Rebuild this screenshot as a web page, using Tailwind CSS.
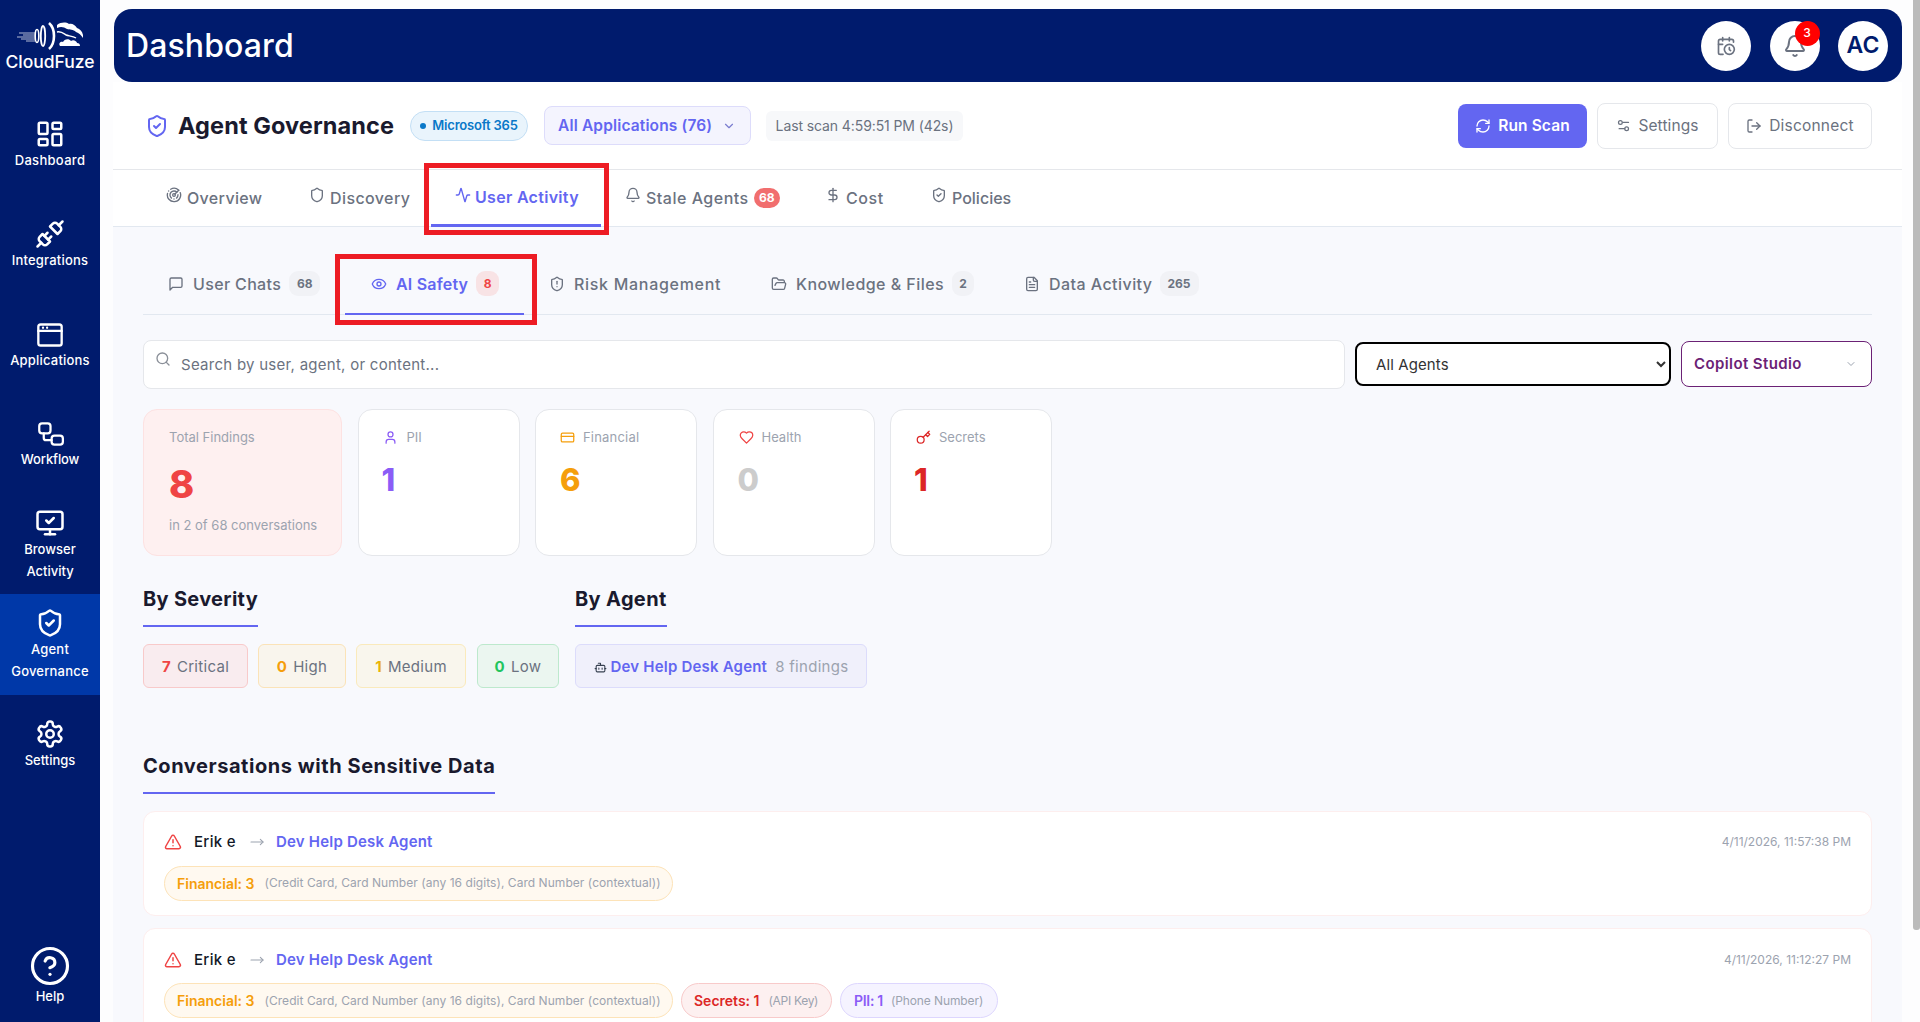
<!DOCTYPE html>
<html>
<head>
<meta charset="utf-8">
<script src="https://cdn.jsdelivr.net/npm/@tailwindcss/browser@4"></script>
</head>
<body class="m-0 bg-[#fdfdfe] [font-family:Inter,'Noto_Sans',sans-serif] text-[#111827]">
<div class="relative flex h-[1022px] w-[1920px] overflow-hidden">

<aside class="flex h-full w-[100px] shrink-0 flex-col bg-[#001b6d] text-white">
  <div class="flex h-[94px] flex-col items-center pt-[22px]">
    <svg width="66" height="28" viewBox="0 0 66 28" fill="none" stroke="white">
      <path d="M2 11h16M6 13h12M0 15h18M4 17h14M9 19h9" stroke-width="1" opacity=".7"/>
      <ellipse cx="20" cy="14" rx="1.8" ry="6.5" stroke-width="1.6"/>
      <ellipse cx="26" cy="14" rx="2.2" ry="10" stroke-width="1.8"/>
      <path d="M32 1c3.5 3 5 8 5 13s-1.500 10-5 13" stroke-width="2.6"/>
      <path d="M40 3c4-3 9-3 12-1 3-1 6 1 8 4 3 1 5 3 6 7v3c-2-3-4-5-7-6-3-3-6-2-9-3-3-2-6-3-10-1z" fill="white" stroke="none"/>
      <path d="M40 10c4-1 6 1 9 3 3 1 7 1 10 3" stroke-width="1.4"/>
      <path d="M43 24c-2-3 1-5 3-4 1-3 6-4 8-1 2-2 6 0 6 2 2 0 3 1 3 3z" fill="white" stroke="none"/>
    </svg>
    <div class="text-[17.500px] leading-[24px] font-medium">CloudFuze</div>
  </div>

  <a class="flex h-[100px] flex-col items-center pt-[25px]">
    <svg class="h-[30px] w-[30px]" viewBox="0 0 24 24" fill="none" stroke="currentColor" stroke-width="2" stroke-linecap="round" stroke-linejoin="round"><rect x="3" y="3" width="7" height="9" rx="1"/><rect x="14" y="3" width="7" height="5" rx="1"/><rect x="14" y="12" width="7" height="9" rx="1"/><rect x="3" y="16" width="7" height="5" rx="1"/></svg>
    <span class="mt-[1px] text-[13px] leading-[20px] font-medium tracking-[0.3px]">Dashboard</span>
  </a>
  <a class="flex h-[100px] flex-col items-center pt-[25px]">
    <svg class="h-[30px] w-[30px]" viewBox="0 0 24 24" fill="none" stroke="currentColor" stroke-width="2" stroke-linecap="round" stroke-linejoin="round"><path d="m19 5 3-3"/><path d="m2 22 3-3"/><path d="M6.3 20.3a2.4 2.4 0 0 0 3.4 0L12 18l-6-6-2.3 2.3a2.4 2.4 0 0 0 0 3.4Z"/><path d="M7.5 13.5 10 11"/><path d="M10.5 16.5 13 14"/><path d="m12 6 6 6 2.3-2.3a2.4 2.4 0 0 0 0-3.4l-2.6-2.6a2.4 2.4 0 0 0-3.4 0Z"/></svg>
    <span class="mt-[1px] text-[13px] leading-[20px] font-medium tracking-[0.2px]">Integrations</span>
  </a>
  <a class="flex h-[100px] flex-col items-center pt-[27px]">
    <svg class="h-[28px] w-[28px]" viewBox="0 0 24 24" fill="none" stroke="currentColor" stroke-width="2" stroke-linecap="round" stroke-linejoin="round"><rect x="2" y="3" width="20" height="18" rx="2"/><path d="M2 8.500h20"/><path d="M6 5.800h.01M9.500 5.800h.01"/></svg>
    <span class="mt-[1px] text-[13px] leading-[20px] font-medium tracking-[0.2px]">Applications</span>
  </a>
  <a class="flex h-[100px] flex-col items-center pt-[27px]">
    <svg class="h-[27px] w-[27px]" viewBox="0 0 24 24" fill="none" stroke="currentColor" stroke-width="2" stroke-linecap="round" stroke-linejoin="round"><rect x="2" y="2" width="10" height="9" rx="2.500"/><path d="M6 11v4a2 2 0 0 0 2 2h5"/><rect x="13" y="13" width="10" height="8" rx="2.500"/></svg>
    <span class="mt-[1px] text-[13px] leading-[20px] font-medium tracking-[-0.1px]">Workflow</span>
  </a>
  <a class="flex h-[100px] flex-col items-center pt-[14px]">
    <svg class="h-[30px] w-[30px]" viewBox="0 0 24 24" fill="none" stroke="currentColor" stroke-width="2" stroke-linecap="round" stroke-linejoin="round"><path d="m9 10 2 2 4-4"/><rect x="2" y="3" width="20" height="14" rx="2"/><path d="M12 17v4"/><path d="M8 21h8"/></svg>
    <span class="text-center text-[13px] leading-[22px] font-medium">Browser<br>Activity</span>
  </a>
  <a class="flex h-[101px] flex-col items-center bg-[#0038a8] pt-[14px]">
    <svg class="h-[30px] w-[30px]" viewBox="0 0 24 24" fill="none" stroke="currentColor" stroke-width="2" stroke-linecap="round" stroke-linejoin="round"><path d="M20 13c0 5-3.500 7.500-7.660 8.950a1 1 0 0 1-.67-.01C7.500 20.500 4 18 4 13V6a1 1 0 0 1 1-1c2 0 4.500-1.200 6.240-2.720a1.170 1.170 0 0 1 1.520 0C14.510 3.810 17 5 19 5a1 1 0 0 1 1 1z"/><path d="m9 12 2 2 4-4"/></svg>
    <span class="text-center text-[13px] leading-[22px] font-medium tracking-[0.2px]">Agent<br>Governance</span>
  </a>
  <a class="flex h-[100px] flex-col items-center pt-[24px]">
    <svg class="h-[30px] w-[30px]" viewBox="0 0 24 24" fill="none" stroke="currentColor" stroke-width="2" stroke-linecap="round" stroke-linejoin="round"><path d="M12.22 2h-.44a2 2 0 0 0-2 2v.18a2 2 0 0 1-1 1.730l-.43.25a2 2 0 0 1-2 0l-.15-.08a2 2 0 0 0-2.730.73l-.22.38a2 2 0 0 0 .73 2.730l.15.1a2 2 0 0 1 1 1.720v.51a2 2 0 0 1-1 1.740l-.15.09a2 2 0 0 0-.73 2.730l.22.38a2 2 0 0 0 2.730.73l.15-.08a2 2 0 0 1 2 0l.43.25a2 2 0 0 1 1 1.730V20a2 2 0 0 0 2 2h.44a2 2 0 0 0 2-2v-.18a2 2 0 0 1 1-1.730l.43-.25a2 2 0 0 1 2 0l.15.08a2 2 0 0 0 2.730-.73l.22-.39a2 2 0 0 0-.73-2.730l-.15-.08a2 2 0 0 1-1-1.740v-.5a2 2 0 0 1 1-1.740l.15-.09a2 2 0 0 0 .73-2.730l-.22-.38a2 2 0 0 0-2.730-.73l-.15.08a2 2 0 0 1-2 0l-.43-.25a2 2 0 0 1-1-1.730V4a2 2 0 0 0-2-2z"/><circle cx="12" cy="12" r="3"/></svg>
    <span class="mt-[1px] text-[13px] leading-[20px] font-medium">Settings</span>
  </a>
  <a class="mt-auto flex h-[80px] flex-col items-center pt-[4px]">
    <svg class="h-[40px] w-[40px]" viewBox="0 0 24 24" fill="none" stroke="currentColor" stroke-width="1.900" stroke-linecap="round" stroke-linejoin="round"><circle cx="12" cy="12" r="10.500"/><path d="M9.090 9a3 3 0 0 1 5.830 1c0 2-3 3-3 3"/><path d="M12 17h.01"/></svg>
    <span class="text-[13px] leading-[20px] font-medium">Help</span>
  </a>
</aside>

<main class="relative ml-[13px] w-[1789px] shrink-0">
  <header class="mt-[9px] ml-[1px] flex h-[73px] items-center rounded-[18px] bg-[#001b6d] pr-[14px] pl-[12px] text-white">
    <h1 class="flex-1 text-[32px] leading-[40px] font-medium tracking-[0.1px]">Dashboard</h1>
    <div class="flex items-center gap-[18.500px]">
      <button class="flex h-[50px] w-[50px] items-center justify-center rounded-full bg-white text-[#6b7280]">
        <svg class="h-[20px] w-[20px]" viewBox="0 0 24 24" fill="none" stroke="currentColor" stroke-width="2" stroke-linecap="round" stroke-linejoin="round"><path d="M21 7.500V6a2 2 0 0 0-2-2H5a2 2 0 0 0-2 2v14a2 2 0 0 0 2 2h3.500"/><path d="M16 2v4"/><path d="M8 2v4"/><path d="M3 10h5"/><path d="M17.500 17.500 16 16.300V14"/><circle cx="16" cy="16" r="6"/></svg>
      </button>
      <button class="relative flex h-[50px] w-[50px] items-center justify-center rounded-full bg-white text-[#6b7280]">
        <svg class="h-[24px] w-[24px]" viewBox="0 0 24 24" fill="none" stroke="currentColor" stroke-width="2" stroke-linecap="round" stroke-linejoin="round"><path d="M10.268 21a2 2 0 0 0 3.464 0"/><path d="M3.262 15.326A1 1 0 0 0 4 17h16a1 1 0 0 0 .74-1.673C19.41 13.956 18 12.499 18 8A6 6 0 0 0 6 8c0 4.499-1.411 5.956-2.738 7.326"/></svg>
        <span class="absolute top-0 right-0 flex h-[25px] w-[25px] items-center justify-center rounded-full bg-[#ff0000] text-[12px] font-medium text-white">3</span>
      </button>
      <button class="flex h-[50px] w-[50px] items-center justify-center rounded-full bg-white text-[23px] font-semibold text-[#001b6d]">AC</button>
    </div>
  </header>

  <section class="bg-white">
    <div class="flex h-[88px] items-center border-b border-[#e5e7eb] pr-[30px] pl-[32px]">
      <svg class="h-[24px] w-[24px] text-[#6366f1]" viewBox="0 0 24 24" fill="none" stroke="currentColor" stroke-width="2" stroke-linecap="round" stroke-linejoin="round"><path d="M20 13c0 5-3.500 7.500-7.660 8.950a1 1 0 0 1-.67-.01C7.500 20.500 4 18 4 13V6a1 1 0 0 1 1-1c2 0 4.500-1.200 6.240-2.720a1.170 1.170 0 0 1 1.520 0C14.510 3.810 17 5 19 5a1 1 0 0 1 1 1z"/><path d="m9 12 2 2 4-4"/></svg>
      <h2 class="ml-[9px] w-[232px] text-[23.500px] font-bold tracking-[0.1px] text-[#1a1a2e]">Agent Governance</h2>
      <span class="flex h-[30px] w-[118px] items-center justify-center gap-[6px] rounded-full border border-[#c3dff5] bg-[#e9f4fc] text-[13px] font-semibold tracking-[-0.2px] text-[#0a78c8]"><span class="h-[6px] w-[6px] rounded-full bg-[#0a78c8]"></span>Microsoft 365</span>
      <button class="ml-[16px] flex h-[39px] w-[207px] items-center justify-between rounded-[8px] border border-[#dddcfb] bg-[#f4f4fe] pr-[14px] pl-[13px] text-[15.500px] font-semibold tracking-[0.15px] text-[#6366f1]">All Applications (76)<svg class="h-[14px] w-[14px] text-[#7a7ccf]" viewBox="0 0 24 24" fill="none" stroke="currentColor" stroke-width="2" stroke-linecap="round" stroke-linejoin="round"><path d="m6 9 6 6 6-6"/></svg></button>
      <span class="ml-[15px] flex h-[30px] w-[197px] items-center justify-center rounded-[6px] bg-[#f7f8fa] text-[14px] tracking-[-0.1px] text-[#6b7280]">Last scan 4:59:51 PM (42s)</span>
      <div class="ml-auto flex items-center gap-[10px]">
        <button class="flex h-[44px] w-[129px] items-center justify-center gap-[7px] rounded-[8px] bg-[#6366f1] text-[15.500px] font-semibold tracking-[0.1px] text-white"><svg class="h-[16px] w-[16px]" viewBox="0 0 24 24" fill="none" stroke="currentColor" stroke-width="2" stroke-linecap="round" stroke-linejoin="round"><path d="M3 12a9 9 0 0 1 9-9 9.750 9.750 0 0 1 6.740 2.740L21 8"/><path d="M21 3v5h-5"/><path d="M21 12a9 9 0 0 1-9 9 9.750 9.750 0 0 1-6.740-2.740L3 16"/><path d="M8 16H3v5"/></svg>Run Scan</button>
        <button class="flex h-[46px] w-[121px] items-center justify-center gap-[7px] rounded-[8px] border border-[#e5e7eb] bg-white text-[15.500px] tracking-[0.1px] text-[#6b7280]"><svg class="h-[15px] w-[15px]" viewBox="0 0 24 24" fill="none" stroke="currentColor" stroke-width="2" stroke-linecap="round" stroke-linejoin="round"><path d="M20 7h-9"/><path d="M14 17H5"/><circle cx="17" cy="17" r="3"/><circle cx="7" cy="7" r="3"/></svg>Settings</button>
        <button class="flex h-[46px] w-[144px] items-center justify-center gap-[7px] rounded-[8px] border border-[#e5e7eb] bg-white text-[15.500px] tracking-[0.2px] text-[#6b7280]"><svg class="h-[16px] w-[16px]" viewBox="0 0 24 24" fill="none" stroke="currentColor" stroke-width="2" stroke-linecap="round" stroke-linejoin="round"><path d="M9 21H5a2 2 0 0 1-2-2V5a2 2 0 0 1 2-2h4"/><path d="m16 17 5-5-5-5"/><path d="M21 12H9"/></svg>Disconnect</button>
      </div>
    </div>
    <nav class="flex h-[57px] items-stretch border-b border-[#e2e8f0] pl-[29px] text-[16px] font-medium text-[#6b7280]">
      <a class="flex w-[143px] items-center gap-[5px] pl-[24px] tracking-[0.35px]"><svg class="mb-[6px] h-[16px] w-[16px]" viewBox="0 0 24 24" fill="none" stroke="currentColor" stroke-width="2" stroke-linecap="round" stroke-linejoin="round"><path d="M19.070 4.930A10 10 0 0 0 6.990 3.340"/><path d="M4 6h.01"/><path d="M2.290 9.620A10 10 0 1 0 21.310 8.350"/><path d="M16.240 7.760A6 6 0 1 0 8.230 16.670"/><path d="M12 18h.01"/><path d="M17.990 11.660A6 6 0 0 1 15.770 16.670"/><circle cx="12" cy="12" r="2"/><path d="m13.410 10.590 5.660-5.660"/></svg>Overview</a>
      <a class="flex w-[146px] items-center gap-[5px] pl-[24px] tracking-[0.4px]"><svg class="mb-[6px] h-[16px] w-[16px]" viewBox="0 0 24 24" fill="none" stroke="currentColor" stroke-width="2" stroke-linecap="round" stroke-linejoin="round"><path d="M20 13c0 5-3.500 7.500-7.660 8.950a1 1 0 0 1-.67-.01C7.500 20.500 4 18 4 13V6a1 1 0 0 1 1-1c2 0 4.500-1.200 6.240-2.720a1.170 1.170 0 0 1 1.520 0C14.510 3.810 17 5 19 5a1 1 0 0 1 1 1z"/></svg>Discovery</a>
      <a class="-mb-px flex w-[170px] items-center gap-[4px] border-b-[3px] border-[#6366f1] pl-[24px] font-semibold tracking-[0.3px] text-[#6366f1]"><svg class="mb-[4px] h-[16px] w-[16px]" viewBox="0 0 24 24" fill="none" stroke="currentColor" stroke-width="2" stroke-linecap="round" stroke-linejoin="round"><path d="M22 12h-2.480a2 2 0 0 0-1.930 1.460l-2.350 8.360a.25.25 0 0 1-.48 0L9.240 2.180a.25.25 0 0 0-.48 0l-2.350 8.360A2 2 0 0 1 4.490 12H2"/></svg>User Activity</a>
      <a class="flex w-[202px] items-center pl-[24px]"><svg class="mr-[5px] mb-[6px] h-[16px] w-[16px]" viewBox="0 0 24 24" fill="none" stroke="currentColor" stroke-width="2" stroke-linecap="round" stroke-linejoin="round"><path d="M10.268 21a2 2 0 0 0 3.464 0"/><path d="M3.262 15.326A1 1 0 0 0 4 17h16a1 1 0 0 0 .74-1.673C19.41 13.956 18 12.499 18 8A6 6 0 0 0 6 8c0 4.499-1.411 5.956-2.738 7.326"/></svg><span class="tracking-[0.5px]">Stale Agents</span><span class="ml-[5px] flex h-[20px] w-[26px] items-center justify-center rounded-full bg-[#f16e6e] text-[12px] font-bold text-white">68</span></a>
      <a class="flex w-[104px] items-center gap-[6px] pl-[23px] tracking-[0.6px]"><svg class="mb-[6px] h-[16px] w-[14px]" viewBox="0 0 20 24" fill="none" stroke="currentColor" stroke-width="2" stroke-linecap="round" stroke-linejoin="round"><path d="M10 2v20"/><path d="M15 5H7.500a3.500 3.500 0 0 0 0 7h5a3.500 3.500 0 0 1 0 7H4"/></svg>Cost</a>
      <a class="flex w-[129px] items-center gap-[5px] pl-[24px]"><svg class="mb-[6px] h-[16px] w-[16px]" viewBox="0 0 24 24" fill="none" stroke="currentColor" stroke-width="2" stroke-linecap="round" stroke-linejoin="round"><path d="M20 13c0 5-3.500 7.500-7.660 8.950a1 1 0 0 1-.67-.01C7.500 20.500 4 18 4 13V6a1 1 0 0 1 1-1c2 0 4.500-1.200 6.240-2.720a1.170 1.170 0 0 1 1.520 0C14.510 3.810 17 5 19 5a1 1 0 0 1 1 1z"/><path d="m9 12 2 2 4-4"/></svg>Policies</a>
    </nav>
  </section>

  <section class="h-[800px] bg-[#f8f9fd] pr-[30px] pl-[30px]">
    <nav class="flex h-[88px] items-stretch border-b border-[#e2e8f0] pt-[34px] text-[16px] font-medium text-[#6b7280]">
      <a class="flex w-[202px] items-center pb-[8px] pl-[25px]"><svg class="mr-[9px] h-[16px] w-[16px]" viewBox="0 0 24 24" fill="none" stroke="currentColor" stroke-width="2" stroke-linecap="round" stroke-linejoin="round"><path d="M21 15a2 2 0 0 1-2 2H7l-4 4V5a2 2 0 0 1 2-2h14a2 2 0 0 1 2 2z"/></svg><span class="tracking-[0.35px]">User Chats</span><span class="ml-[8px] flex h-[25px] w-[31px] items-center justify-center rounded-[9px] bg-[#f1f2f6] text-[12px] font-bold text-[#6b7280]">68</span></a>
      <a class="-mb-px flex w-[179px] items-center border-b-[2px] border-[#6366f1] pb-[7px] pl-[26px] font-semibold text-[#6366f1]"><svg class="mr-[9px] h-[16px] w-[16px]" viewBox="0 0 24 24" fill="none" stroke="currentColor" stroke-width="2" stroke-linecap="round" stroke-linejoin="round"><path d="M2.062 12.348a1 1 0 0 1 0-.696 10.750 10.750 0 0 1 19.876 0 1 1 0 0 1 0 .696 10.750 10.750 0 0 1-19.876 0"/><circle cx="12" cy="12" r="3"/></svg><span class="tracking-[0.2px]">AI Safety</span><span class="ml-[8px] flex h-[25px] w-[23px] items-center justify-center rounded-[9px] bg-[#f8e3e5] text-[12px] font-bold text-[#ef4444]">8</span></a>
      <a class="flex w-[222px] items-center pb-[8px] pl-[25px] tracking-[0.7px]"><svg class="mr-[9px] h-[16px] w-[16px]" viewBox="0 0 24 24" fill="none" stroke="currentColor" stroke-width="2" stroke-linecap="round" stroke-linejoin="round"><path d="M20 13c0 5-3.500 7.500-7.660 8.950a1 1 0 0 1-.67-.01C7.500 20.500 4 18 4 13V6a1 1 0 0 1 1-1c2 0 4.500-1.200 6.240-2.720a1.170 1.170 0 0 1 1.520 0C14.510 3.810 17 5 19 5a1 1 0 0 1 1 1z"/><path d="M12 8v4"/><path d="M12 16h.01"/></svg>Risk Management</a>
      <a class="flex w-[254px] items-center pb-[8px] pl-[25px]"><svg class="mr-[9px] h-[16px] w-[16px]" viewBox="0 0 24 24" fill="none" stroke="currentColor" stroke-width="2" stroke-linecap="round" stroke-linejoin="round"><path d="m6 14 1.500-2.900A2 2 0 0 1 9.240 10H20a2 2 0 0 1 1.940 2.500l-1.540 6a2 2 0 0 1-1.950 1.500H4a2 2 0 0 1-2-2V5a2 2 0 0 1 2-2h3.900a2 2 0 0 1 1.690.9l.81 1.200a2 2 0 0 0 1.670.9H18a2 2 0 0 1 2 2v2"/></svg><span class="tracking-[0.45px]">Knowledge &amp; Files</span><span class="ml-[8px] flex h-[25px] w-[22px] items-center justify-center rounded-[9px] bg-[#f1f2f6] text-[12px] font-bold text-[#6b7280]">2</span></a>
      <a class="flex items-center pb-[8px] pl-[24px]"><svg class="mr-[9px] h-[16px] w-[16px]" viewBox="0 0 24 24" fill="none" stroke="currentColor" stroke-width="2" stroke-linecap="round" stroke-linejoin="round"><path d="M15 2H6a2 2 0 0 0-2 2v16a2 2 0 0 0 2 2h12a2 2 0 0 0 2-2V7Z"/><path d="M14 2v4a2 2 0 0 0 2 2h4"/><path d="M10 9H8"/><path d="M16 13H8"/><path d="M16 17H8"/></svg><span class="tracking-[0.45px]">Data Activity</span><span class="ml-[7px] flex h-[25px] w-[39px] items-center justify-center rounded-[9px] bg-[#f1f2f6] text-[12px] font-bold text-[#6b7280]">265</span></a>
    </nav>

    <div class="mt-[25px] flex h-[49px] items-center gap-[10px]">
      <div class="relative h-[49px] w-[1202px]">
        <svg class="absolute top-[11px] left-[12px] h-[16px] w-[16px] text-[#8a8f98]" viewBox="0 0 24 24" fill="none" stroke="currentColor" stroke-width="2" stroke-linecap="round" stroke-linejoin="round"><circle cx="11" cy="11" r="8"/><path d="m21 21-4.300-4.300"/></svg>
        <input class="h-full w-full rounded-[8px] border border-[#e5e7eb] bg-white pl-[37px] text-[15px] tracking-[0.27px] placeholder:text-[#6b7280]" placeholder="Search by user, agent, or content...">
      </div>
      <select class="mb-[1px] h-[44px] w-[316px] rounded-[8px] border-2 border-black bg-white pl-[15px] text-[15px] tracking-[0.1px] text-[#333]"><option>All Agents</option></select>
      <button class="mb-[1px] flex h-[46px] w-[191px] items-center justify-between rounded-[8px] border border-[#6b2175] bg-white pr-[14px] pl-[12px] text-[15px] font-semibold tracking-[0.4px] text-[#6b2175]">Copilot Studio<svg class="h-[12px] w-[12px] text-[#9ca3af]" viewBox="0 0 24 24" fill="none" stroke="currentColor" stroke-width="2" stroke-linecap="round" stroke-linejoin="round"><path d="m6 9 6 6 6-6"/></svg></button>
    </div>

    <div class="mt-[20px] flex h-[147px] gap-[15.500px]">
      <div class="flex w-[199px] flex-col rounded-[14px] border border-[#fde2e2] bg-[#fef0f0] pt-[17px] pl-[25px]">
        <span class="text-[13px] leading-[20px] text-[#9ca3af]">Total Findings</span>
        <span class="mt-[15px] text-[38px] leading-[44px] font-extrabold text-[#ef4444]">8</span>
        <span class="mt-[9px] text-[13px] leading-[20px] text-[#9ca3af]">in 2 of 68 conversations</span>
      </div>
      <div class="flex w-[162px] flex-col rounded-[14px] border border-[#e5e7eb] bg-white pt-[17px] pl-[24px]">
        <span class="flex items-center gap-[9px] text-[13px] leading-[20px] text-[#9ca3af]"><svg class="h-[15px] w-[15px] text-[#8b5cf6]" viewBox="0 0 24 24" fill="none" stroke="currentColor" stroke-width="2" stroke-linecap="round" stroke-linejoin="round"><path d="M19 21v-2a4 4 0 0 0-4-4H9a4 4 0 0 0-4 4v2"/><circle cx="12" cy="7" r="4"/></svg>PII</span>
        <span class="mt-[13px] -ml-[1px] text-[31px] leading-[40px] font-extrabold text-[#8b5cf6]">1</span>
      </div>
      <div class="flex w-[162px] flex-col rounded-[14px] border border-[#e5e7eb] bg-white pt-[17px] pl-[24px]">
        <span class="flex items-center gap-[8px] text-[13px] leading-[20px] tracking-[0.2px] text-[#9ca3af]"><svg class="h-[15px] w-[15px] text-[#f59e0b]" viewBox="0 0 24 24" fill="none" stroke="currentColor" stroke-width="2" stroke-linecap="round" stroke-linejoin="round"><rect x="2" y="5" width="20" height="14" rx="2"/><path d="M2 10h20"/></svg>Financial</span>
        <span class="mt-[13px] text-[31px] leading-[40px] font-extrabold text-[#f59e0b]">6</span>
      </div>
      <div class="flex w-[162px] flex-col rounded-[14px] border border-[#e5e7eb] bg-white pt-[17px] pl-[25px]">
        <span class="flex items-center gap-[8px] text-[13px] leading-[20px] text-[#9ca3af]"><svg class="h-[15px] w-[15px] text-[#ef4444]" viewBox="0 0 24 24" fill="none" stroke="currentColor" stroke-width="2" stroke-linecap="round" stroke-linejoin="round"><path d="M19 14c1.490-1.460 3-3.210 3-5.500A5.500 5.500 0 0 0 16.500 3c-1.760 0-3 .5-4.500 2-1.500-1.500-2.740-2-4.500-2A5.500 5.500 0 0 0 2 8.500c0 2.300 1.500 4.050 3 5.500l7 7Z"/></svg>Health</span>
        <span class="mt-[13px] -ml-[1px] text-[31px] leading-[40px] font-extrabold text-[#cccccc]">0</span>
      </div>
      <div class="flex w-[162px] flex-col rounded-[14px] border border-[#e5e7eb] bg-white pt-[17px] pl-[25px]">
        <span class="flex items-center gap-[8px] text-[13px] leading-[20px] text-[#9ca3af]"><svg class="h-[15px] w-[15px] text-[#dc2626]" viewBox="0 0 24 24" fill="none" stroke="currentColor" stroke-width="2" stroke-linecap="round" stroke-linejoin="round"><path d="m15.500 7.500 3 3L22 7l-3-3"/><path d="m21 2-9.600 9.600"/><circle cx="7.500" cy="15.500" r="5.500"/></svg>Secrets</span>
        <span class="mt-[13px] -ml-[2px] text-[31px] leading-[40px] font-extrabold text-[#dc2626]">1</span>
      </div>
    </div>

    <div class="mt-[28px] flex">
      <div class="w-[432px]">
        <h3 class="inline-block border-b-2 border-[#6366f1] pb-[11px] text-[20px] leading-[30px] font-bold tracking-[0.3px] text-[#1a1a2e]">By Severity</h3>
        <div class="mt-[17px] flex gap-[10px] text-[15px] tracking-[0.3px] text-[#6b7280]">
          <span class="flex h-[44px] w-[105px] items-center justify-center gap-[6px] rounded-[6px] border border-[#f8caca] bg-[#f9ecef] pt-[2px]"><b class="font-bold text-[#ef4444]">7</b>Critical</span>
          <span class="flex h-[44px] w-[88px] items-center justify-center gap-[6px] rounded-[6px] border border-[#fbe3b8] bg-[#f9f5ed] pt-[2px]"><b class="font-bold text-[#f59e0b]">0</b>High</span>
          <span class="flex h-[44px] w-[110px] items-center justify-center gap-[6px] rounded-[6px] border border-[#faeabc] bg-[#f9f6ed] pt-[2px]"><b class="font-bold text-[#eab308]">1</b>Medium</span>
          <span class="ml-[1px] flex h-[44px] w-[82px] items-center justify-center gap-[6px] rounded-[6px] border border-[#bde9cd] bg-[#ebf6f0] pt-[2px]"><b class="font-bold text-[#22c55e]">0</b>Low</span>
        </div>
      </div>
      <div>
        <h3 class="inline-block border-b-2 border-[#6366f1] pb-[11px] text-[20px] leading-[30px] font-bold tracking-[0.35px] text-[#1a1a2e]">By Agent</h3>
        <div class="mt-[17px] flex h-[44px] w-[292px] items-center justify-center gap-[8px] rounded-[6px] border border-[#dcdcfb] bg-[#f0f0fb] pt-[2px] text-[15px]">
          <span class="flex items-center gap-[4px] font-semibold tracking-[0.2px] text-[#6366f1]"><svg class="h-[13px] w-[13px] text-[#374151]" viewBox="0 0 24 24" fill="none" stroke="currentColor" stroke-width="2" stroke-linecap="round" stroke-linejoin="round"><path d="M12 8V4H8"/><rect x="4" y="8" width="16" height="12" rx="2"/><path d="M2 14h2"/><path d="M20 14h2"/><path d="M15 13v2"/><path d="M9 13v2"/></svg>Dev Help Desk Agent</span>
          <span class="tracking-[0.3px] text-[#9ca3af]">8 findings</span>
        </div>
      </div>
    </div>

    <h3 class="mt-[63px] inline-block border-b-2 border-[#6366f1] pb-[11px] text-[20px] leading-[30px] font-bold tracking-[0.55px] text-[#1a1a2e]">Conversations with Sensitive Data</h3>

    <div class="mt-[17px] flex flex-col gap-[12px]">
      <div class="h-[105px] rounded-[12px] border border-[#fdeeee] bg-white pt-[19px] pr-[20px] pl-[20px]">
        <div class="flex h-[22px] items-center">
          <svg class="h-[18px] w-[18px] text-[#ef4444]" viewBox="0 0 24 24" fill="none" stroke="currentColor" stroke-width="2" stroke-linecap="round" stroke-linejoin="round"><path d="m21.730 18-8-14a2 2 0 0 0-3.480 0l-8 14A2 2 0 0 0 4 21h16a2 2 0 0 0 1.730-3"/><path d="M12 9v4"/><path d="M12 17h.01"/></svg>
          <span class="ml-[12px] w-[55px] text-[15px] font-medium tracking-[0.3px] text-[#111827]">Erik e</span>
          <svg class="h-[16px] w-[16px] text-[#9ca3af]" viewBox="0 0 24 24" fill="none" stroke="currentColor" stroke-width="1.600" stroke-linecap="round" stroke-linejoin="round"><path d="M3 12h18"/><path d="m17 8 4 4-4 4"/></svg>
          <span class="ml-[11px] text-[15px] font-semibold tracking-[0.2px] text-[#6366f1]">Dev Help Desk Agent</span>
          <span class="ml-auto text-[12px] text-[#9ca3af]">4/11/2026, 11:57:38 PM</span>
        </div>
        <div class="mt-[13px] flex gap-[8px]">
          <span class="flex h-[35px] w-[509px] items-center gap-[10px] rounded-full border border-[#fde3b8] bg-[#fff9f0] pb-[1px] pl-[12px]"><b class="text-[14px] font-semibold text-[#f59e0b]">Financial: 3</b><span class="text-[12px] tracking-[0.05px] text-[#9ca3af]">(Credit Card, Card Number (any 16 digits), Card Number (contextual))</span></span>
        </div>
      </div>
      <div class="h-[105px] rounded-[12px] border border-[#fdeeee] bg-white pt-[20px] pr-[20px] pl-[20px]">
        <div class="flex h-[22px] items-center">
          <svg class="h-[18px] w-[18px] text-[#ef4444]" viewBox="0 0 24 24" fill="none" stroke="currentColor" stroke-width="2" stroke-linecap="round" stroke-linejoin="round"><path d="m21.730 18-8-14a2 2 0 0 0-3.480 0l-8 14A2 2 0 0 0 4 21h16a2 2 0 0 0 1.730-3"/><path d="M12 9v4"/><path d="M12 17h.01"/></svg>
          <span class="ml-[12px] w-[55px] text-[15px] font-medium tracking-[0.3px] text-[#111827]">Erik e</span>
          <svg class="h-[16px] w-[16px] text-[#9ca3af]" viewBox="0 0 24 24" fill="none" stroke="currentColor" stroke-width="1.600" stroke-linecap="round" stroke-linejoin="round"><path d="M3 12h18"/><path d="m17 8 4 4-4 4"/></svg>
          <span class="ml-[11px] text-[15px] font-semibold tracking-[0.2px] text-[#6366f1]">Dev Help Desk Agent</span>
          <span class="ml-auto text-[12px] text-[#9ca3af]">4/11/2026, 11:12:27 PM</span>
        </div>
        <div class="mt-[12px] flex gap-[8px]">
          <span class="flex h-[35px] w-[509px] items-center gap-[10px] rounded-full border border-[#fde3b8] bg-[#fff9f0] pl-[12px]"><b class="text-[14px] font-semibold text-[#f59e0b]">Financial: 3</b><span class="text-[12px] tracking-[0.05px] text-[#9ca3af]">(Credit Card, Card Number (any 16 digits), Card Number (contextual))</span></span>
          <span class="flex h-[35px] w-[151px] items-center gap-[9px] rounded-full border border-[#f8caca] bg-[#fdf0f0] pl-[12px]"><b class="text-[14px] font-semibold text-[#dc2626]">Secrets: 1</b><span class="text-[12px] tracking-[-0.3px] text-[#9ca3af]">(API Key)</span></span>
          <span class="flex h-[35px] w-[158px] items-center gap-[8px] rounded-full border border-[#ddd6fe] bg-[#f5f3ff] pl-[13px]"><b class="text-[14px] font-semibold tracking-[-0.3px] text-[#8b5cf6]">PII: 1</b><span class="text-[12px] tracking-[-0.1px] text-[#9ca3af]">(Phone Number)</span></span>
        </div>
      </div>
    </div>
  </section>

  <div class="absolute top-[163px] left-[311px] h-[72px] w-[185px] border-[5px] border-[#ed1c24]"></div>
  <div class="absolute top-[254px] left-[222px] h-[71px] w-[202px] border-[5px] border-[#ed1c24]"></div>
</main>

<div class="absolute top-0 right-0 h-[930px] w-[7px] rounded-b-[3px] bg-[#bbbbbb]"></div>
</div>
</body>
</html>
